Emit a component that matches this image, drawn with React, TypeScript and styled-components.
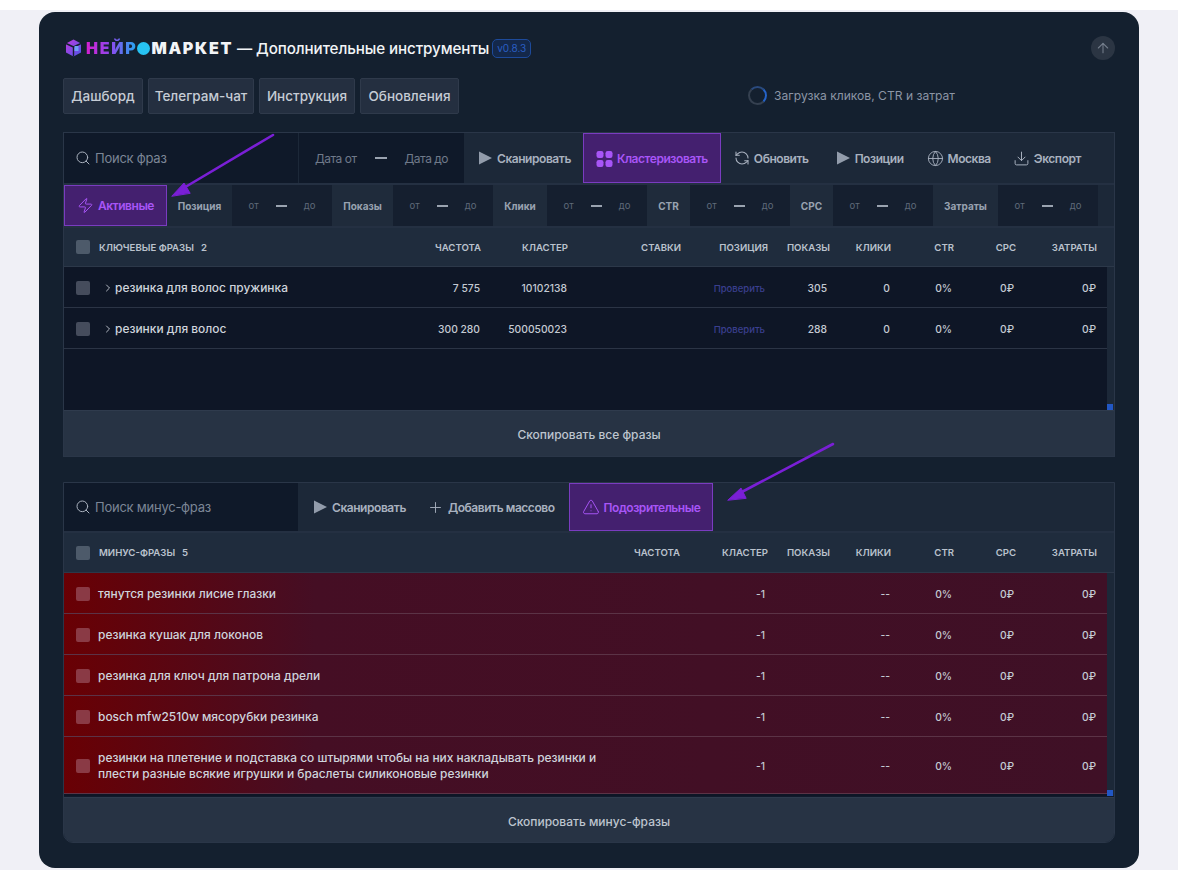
import React from 'react';
import styled, { createGlobalStyle } from 'styled-components';
import { ArrowUp, ChevronRight, Download, Globe, Plus, RefreshCcw, Search, TriangleAlert, Zap } from 'lucide-react';

const GlobalStyle = createGlobalStyle`
  html, body { margin: 0; padding: 0; background: #f0f0f6; }
  body { font-family: Inter, "Noto Sans", sans-serif; }
  * { box-sizing: border-box; }
`;

const Page = styled.div`
  position: relative;
  width: 1178px;
  height: 870px;
  overflow: hidden;
  border-top: 10px solid #fff;
  padding: 2px 39px 0;
`;

const Card = styled.main`
  width: 1100px;
  height: 856px;
  background: #14202f;
  border-radius: 16px;
  padding: 24px 24px 25px;
  display: flex;
  flex-direction: column;
`;

const Header = styled.header`
  height: 24px;
  display: flex;
  align-items: center;
  color: #f2f4f7;
`;

const Brand = styled.div`
  display: flex;
  align-items: center;
  margin-left: 2px;
  font-size: 16px;
  font-weight: 900;
  letter-spacing: 1.7px;
`;

const BrandGradient = styled.span`
  margin-left: 4px;
  background: linear-gradient(90deg, #d61fd0 0%, #8a4cf0 50%, #22a9f0 100%);
  -webkit-background-clip: text;
  background-clip: text;
  color: transparent;
`;

const BrandDot = styled.span`
  width: 13px;
  height: 13px;
  margin: 0 1px 0 0;
  border-radius: 50%;
  background: #27c3f3;
`;

const HeaderTitle = styled.span`
  margin-left: 4px;
  font-size: 15.2px;
  font-weight: 500;
  letter-spacing: -0.1px;
`;

const Version = styled.span`
  margin-left: 3px;
  padding: 2px 4px;
  border: 1px solid #1d4a9a;
  border-radius: 5px;
  background: #14284a;
  color: #2a5fc4;
  font-size: 10px;
  line-height: 13px;
`;

const UpButton = styled.button`
  margin-left: auto;
  width: 24px;
  height: 24px;
  padding: 0;
  border: 0;
  border-radius: 50%;
  background: #2b3543;
  color: #737d8b;
  display: flex;
  align-items: center;
  justify-content: center;
`;

const TabRow = styled.nav`
  margin-top: 18px;
  height: 36px;
  display: flex;
  align-items: stretch;
  gap: 5px;
`;

const Tab = styled.button<{ $width: number }>`
  width: ${({ $width }) => $width}px;
  padding: 0;
  border: 1px solid #2f3a4b;
  border-radius: 2px;
  background: #242f40;
  color: #c6ccd5;
  font: 500 13.5px Inter, sans-serif;
`;

const Loading = styled.div`
  margin-left: 284px;
  padding-bottom: 2px;
  display: flex;
  align-items: center;
  gap: 7px;
  color: #8b95a5;
  font-size: 12.1px;
`;

const Spinner = styled.span`
  width: 19px;
  height: 19px;
  border-radius: 50%;
  border: 2px solid #354050;
  border-right-color: #2563c9;
  border-top-color: #2a4a7e;
`;

const Section = styled.section<{ $top: number; $rounded?: boolean }>`
  margin-top: ${({ $top }) => $top}px;
  border: 1px solid #2a3648;
  border-radius: ${({ $rounded }) => ($rounded ? '0 0 10px 10px' : '0')};
  background: #1c2838;
  overflow: hidden;
`;

const Toolbar = styled.div<{ $height: number }>`
  height: ${({ $height }) => $height}px;
  display: flex;
  align-items: stretch;
  border-bottom: 2px solid #243042;
`;

const SearchBox = styled.div`
  width: 234px;
  display: flex;
  align-items: center;
  gap: 4px;
  padding-left: 11px;
  background: #0f1929;
  color: #7c8696;
  font-size: 13px;
  letter-spacing: -0.25px;
`;

const DateRange = styled.div`
  width: 166px;
  display: flex;
  align-items: center;
  justify-content: center;
  gap: 18px;
  border-left: 1px solid #1c2838;
  background: #0f1929;
  color: #6f7a8a;
  font-size: 12px;
  letter-spacing: -0.5px;
`;

const Dash = styled.span<{ $width: number }>`
  width: ${({ $width }) => $width}px;
  height: 2px;
  background: #9aa3b0;
`;

const ToolButton = styled.button<{ $active?: boolean; $pad?: number; $padRight?: number }>`
  display: flex;
  align-items: center;
  gap: 4px;
  padding: 0 ${({ $pad = 12, $padRight }) => $padRight ?? $pad}px 0 ${({ $pad = 12 }) => $pad}px;
  border: 1px solid ${({ $active }) => ($active ? '#7a3cc0' : 'transparent')};
  background: ${({ $active }) => ($active ? '#44206f' : 'transparent')};
  color: ${({ $active }) => ($active ? '#a855f7' : '#a8b1bf')};
  font: 600 12px Inter, sans-serif;
  letter-spacing: -0.45px;
  white-space: nowrap;
`;

const FilterRow = styled.div`
  height: 43px;
  display: flex;
  align-items: stretch;
  border-bottom: 2px solid #243042;
`;

const ActiveFilter = styled(ToolButton)`
  width: 103px;
  justify-content: center;
`;

const FilterLabel = styled.div<{ $width: number; $tinted?: boolean }>`
  width: ${({ $width }) => $width}px;
  display: flex;
  align-items: center;
  justify-content: center;
  background: ${({ $tinted }) => ($tinted ? '#1f2b3b' : 'transparent')};
  color: #98a2b0;
  font-size: 10px;
  font-weight: 700;
`;

const FilterRange = styled.div`
  width: 100px;
  display: flex;
  align-items: center;
  justify-content: center;
  gap: 17px;
  background: #151f2f;
  color: #5f6a7a;
  font-size: 9.5px;
`;

const TableGrid = styled.div<{ $columns: string }>`
  display: grid;
  grid-template-columns: 1fr ${({ $columns }) => $columns};
  align-items: center;
`;

const HeadRow = styled(TableGrid)<{ $height: number }>`
  height: ${({ $height }) => $height}px;
  padding: 0 17px 0 0;
  border-bottom: 1px solid #2c3849;
  background: #1f2c3d;
  color: #bac2cd;
  font-size: 9.6px;
  font-weight: 600;
`;

const ScrollArea = styled.div`
  display: flex;
  align-items: stretch;
`;

const RowList = styled.div<{ $height: number }>`
  flex: 1;
  min-width: 0;
  height: ${({ $height }) => $height}px;
  background: #0e1626;
`;

const ScrollTrack = styled.div`
  width: 7px;
  display: flex;
  align-items: flex-end;
`;

const ScrollThumb = styled.div`
  width: 6px;
  height: 6px;
  background: #2257c4;
`;

const Row = styled(TableGrid)<{ $height: number; $alert?: boolean }>`
  height: ${({ $height }) => $height}px;
  padding: 2px 11px 0 0;
  border-bottom: 1px solid ${({ $alert }) => ($alert ? '#5b3346' : '#2b3445')};
  background: ${({ $alert }) =>
    $alert ? 'linear-gradient(90deg, #690004 0%, #450e24 24%, #3f1026 100%)' : 'transparent'};
  color: #c4cad3;
  font-size: 10.3px;
  font-weight: 500;
`;

const NameCell = styled.div<{ $span?: number }>`
  grid-column: span ${({ $span = 1 }) => $span};
  display: flex;
  align-items: center;
  padding-left: 12px;
`;

const CheckBox = styled.span<{ $tone: string }>`
  flex: none;
  width: 14px;
  height: 14px;
  border-radius: 2px;
  background: ${({ $tone }) => $tone};
`;

const HeadTitle = styled.span`
  margin-left: 9px;
`;

const HeadCount = styled.span`
  margin-left: 7px;
`;

const Chevron = styled.span`
  margin-left: 12px;
  width: 12px;
  display: flex;
  color: #c4cad3;
`;

const Phrase = styled.span<{ $gap: number }>`
  margin-left: ${({ $gap }) => $gap}px;
  max-width: 505px;
  font-size: 11.95px;
  line-height: 16px;
  color: #cfd4dc;
`;

const Cell = styled.div<{ $inset?: number }>`
  text-align: right;
  padding-right: ${({ $inset = 0 }) => $inset}px;
  white-space: nowrap;
`;

const CheckLink = styled.span`
  color: #3a3f8f;
  font-size: 9.5px;
`;

const CopyButton = styled.button<{ $height: number; $offset: number }>`
  display: block;
  width: 100%;
  height: ${({ $height }) => $height}px;
  padding: ${({ $offset }) => $offset}px 0 0;
  border: 0;
  border-top: 1px solid #2f3b4d;
  background: #273344;
  color: #bec5cf;
  font: 500 12px Inter, sans-serif;
`;

const Gap = styled.div`
  height: 1px;
  background: #101a2b;
`;

const Annotations = styled.svg`
  position: absolute;
  left: 0;
  top: -10px;
  width: 1178px;
  height: 870px;
  pointer-events: none;
`;

const PlayIcon = () => (
  <svg width="15" height="16" viewBox="0 0 15 16">
    <path d="M1 1.5 L14 8 L1 14.5 Z" fill="#929cab" />
  </svg>
);

const ClusterIcon = () => (
  <svg width="17" height="17" viewBox="0 0 17 17" fill="#a855f7">
    <rect x="0.5" y="1" width="7" height="7" rx="2.2" />
    <rect x="9.5" y="1" width="7" height="7" rx="2.2" />
    <rect x="0.5" y="10" width="7" height="7" rx="2.2" />
    <rect x="9.5" y="10" width="7" height="7" rx="2.2" />
  </svg>
);

const LogoIcon = () => (
  <svg width="17" height="18" viewBox="0 0 17 18">
    <defs>
      <linearGradient id="logo-cube" x1="0" y1="0" x2="1" y2="1">
        <stop offset="0" stopColor="#c23be0" />
        <stop offset="1" stopColor="#4b55e8" />
      </linearGradient>
    </defs>
    <path d="M8.5 0.5 L16 4.5 V13.5 L8.5 17.5 L1 13.5 V4.5 Z" fill="url(#logo-cube)" />
    <path d="M8.5 8 L16 4.5 M8.5 8 L1 4.5 M8.5 8 V17.5" stroke="#14202f" strokeWidth="1.4" fill="none" />
    <rect x="9.5" y="7" width="4" height="5" fill="#6fa0f5" />
  </svg>
);

const DATA_COLUMNS_MAIN = '86px 87px 113px 87px 62px 61px 63px 62px 81px';
const DATA_COLUMNS_MINUS = '285px 88px 62px 61px 63px 62px 81px';

const FILTERS = [
  { label: 'Позиция', width: 65 },
  { label: 'Показы', width: 61, tinted: true },
  { label: 'Клики', width: 54, tinted: true },
  { label: 'CTR', width: 43, tinted: true },
  { label: 'CPC', width: 43, tinted: true },
  { label: 'Затраты', width: 65, tinted: true },
];

const MAIN_ROWS = [
  { name: 'резинка для волос пружинка', freq: '7 575', cluster: '10102138', shows: '305' },
  { name: 'резинки для волос', freq: '300 280', cluster: '500050023', shows: '288' },
];

const MINUS_ROWS = [
  { name: 'тянутся резинки лисие глазки', height: 41 },
  { name: 'резинка кушак для локонов', height: 41 },
  { name: 'резинка для ключ для патрона дрели', height: 41 },
  { name: 'bosch mfw2510w мясорубки резинка', height: 41 },
  {
    name: 'резинки на плетение и подставка со штырями чтобы на них накладывать резинки и плести разные всякие игрушки и браслеты силиконовые резинки',
    height: 57,
  },
];

const App = () => (
  <Page>
    <GlobalStyle />
    <Card>
      <Header>
        <Brand>
          <LogoIcon />
          <BrandGradient>НЕЙР</BrandGradient>
          <BrandDot />
          МАРКЕТ
        </Brand>
        <HeaderTitle>— Дополнительные инструменты</HeaderTitle>
        <Version>v0.8.3</Version>
        <UpButton aria-label="Наверх">
          <ArrowUp size={16} strokeWidth={1.6} />
        </UpButton>
      </Header>

      <TabRow>
        <Tab $width={80}>Дашборд</Tab>
        <Tab $width={106}>Телеграм-чат</Tab>
        <Tab $width={96}>Инструкция</Tab>
        <Tab $width={99}>Обновления</Tab>
        <Loading>
          <Spinner />
          Загрузка кликов, CTR и затрат
        </Loading>
      </TabRow>

      <Section $top={18}>
        <Toolbar $height={52}>
          <SearchBox>
            <Search size={16} strokeWidth={1.5} color="#aab2bf" />
            Поиск фраз
          </SearchBox>
          <DateRange>
            Дата от
            <Dash $width={12} />
            Дата до
          </DateRange>
          <ToolButton $pad={13} $padRight={11}><PlayIcon />Сканировать</ToolButton>
          <ToolButton $active><ClusterIcon />Кластеризовать</ToolButton>
          <ToolButton $pad={12}><RefreshCcw size={16} strokeWidth={1.6} />Обновить</ToolButton>
          <ToolButton $pad={13} $padRight={10}><PlayIcon />Позиции</ToolButton>
          <ToolButton $pad={11} $padRight={8}><Globe size={17} strokeWidth={1.3} />Москва</ToolButton>
          <ToolButton $pad={12}><Download size={17} strokeWidth={1.4} />Экспорт</ToolButton>
        </Toolbar>
        <FilterRow>
          <ActiveFilter $active>
            <Zap size={17} strokeWidth={1.4} />
            Активные
          </ActiveFilter>
          {FILTERS.map((filter) => (
            <React.Fragment key={filter.label}>
              <FilterLabel $width={filter.width} $tinted={filter.tinted}>{filter.label}</FilterLabel>
              <FilterRange>
                от
                <Dash $width={11} />
                до
              </FilterRange>
            </React.Fragment>
          ))}
        </FilterRow>
        <HeadRow $columns={DATA_COLUMNS_MAIN} $height={39}>
          <NameCell>
            <CheckBox $tone="#4d5a6a" />
            <HeadTitle>КЛЮЧЕВЫЕ ФРАЗЫ</HeadTitle>
            <HeadCount>2</HeadCount>
          </NameCell>
          <Cell>ЧАСТОТА</Cell>
          <Cell>КЛАСТЕР</Cell>
          <Cell>СТАВКИ</Cell>
          <Cell>ПОЗИЦИЯ</Cell>
          <Cell>ПОКАЗЫ</Cell>
          <Cell>КЛИКИ</Cell>
          <Cell>CTR</Cell>
          <Cell>CPC</Cell>
          <Cell>ЗАТРАТЫ</Cell>
        </HeadRow>
        <ScrollArea>
          <RowList $height={143}>
            {MAIN_ROWS.map((row) => (
              <Row key={row.name} $columns={DATA_COLUMNS_MAIN} $height={41}>
                <NameCell>
                  <CheckBox $tone="#454c5c" />
                  <Chevron><ChevronRight size={12} strokeWidth={1.8} /></Chevron>
                  <Phrase $gap={1}>{row.name}</Phrase>
                </NameCell>
                <Cell>{row.freq}</Cell>
                <Cell>{row.cluster}</Cell>
                <Cell />
                <Cell $inset={2}><CheckLink>Проверить</CheckLink></Cell>
                <Cell $inset={2}>{row.shows}</Cell>
                <Cell>0</Cell>
                <Cell $inset={1}>0%</Cell>
                <Cell $inset={1}>0₽</Cell>
                <Cell>0₽</Cell>
              </Row>
            ))}
          </RowList>
          <ScrollTrack><ScrollThumb /></ScrollTrack>
        </ScrollArea>
        <CopyButton $height={46} $offset={1}>Скопировать все фразы</CopyButton>
      </Section>

      <Section $top={25} $rounded>
        <Toolbar $height={50}>
          <SearchBox>
            <Search size={16} strokeWidth={1.5} color="#aab2bf" />
            Поиск минус-фраз
          </SearchBox>
          <ToolButton $pad={14} $padRight={10}><PlayIcon />Сканировать</ToolButton>
          <ToolButton $pad={9} $padRight={13}><Plus size={17} strokeWidth={1.3} />Добавить массово</ToolButton>
          <ToolButton $active $pad={12}><TriangleAlert size={18} strokeWidth={1.3} />Подозрительные</ToolButton>
        </Toolbar>
        <HeadRow $columns={DATA_COLUMNS_MINUS} $height={40}>
          <NameCell>
            <CheckBox $tone="#4d5a6a" />
            <HeadTitle>МИНУС-ФРАЗЫ</HeadTitle>
            <HeadCount>5</HeadCount>
          </NameCell>
          <Cell>ЧАСТОТА</Cell>
          <Cell>КЛАСТЕР</Cell>
          <Cell>ПОКАЗЫ</Cell>
          <Cell>КЛИКИ</Cell>
          <Cell>CTR</Cell>
          <Cell>CPC</Cell>
          <Cell>ЗАТРАТЫ</Cell>
        </HeadRow>
        <ScrollArea>
          <RowList $height={223}>
            {MINUS_ROWS.map((row) => (
              <Row key={row.name} $columns={DATA_COLUMNS_MINUS} $height={row.height} $alert>
                <NameCell $span={2}>
                  <CheckBox $tone="#8a3a45" />
                  <Phrase $gap={8}>{row.name}</Phrase>
                </NameCell>
                <Cell $inset={2}>-1</Cell>
                <Cell />
                <Cell>--</Cell>
                <Cell $inset={1}>0%</Cell>
                <Cell $inset={1}>0₽</Cell>
                <Cell>0₽</Cell>
              </Row>
            ))}
          </RowList>
          <ScrollTrack><ScrollThumb /></ScrollTrack>
        </ScrollArea>
        <Gap />
        <CopyButton $height={45} $offset={2}>Скопировать минус-фразы</CopyButton>
      </Section>
    </Card>

    <Annotations viewBox="0 0 1178 870">
      <g stroke="#7a1fd6" strokeWidth="2.6" fill="#7a1fd6" strokeLinecap="round">
        <path d="M273 135 L182 189" fill="none" />
        <path d="M172 196 L184 183 L190 193 Z" strokeWidth="1" />
        <path d="M833 444 L738 494" fill="none" />
        <path d="M728 500 L741 488 L746 498 Z" strokeWidth="1" />
      </g>
    </Annotations>
  </Page>
);

export default App;
